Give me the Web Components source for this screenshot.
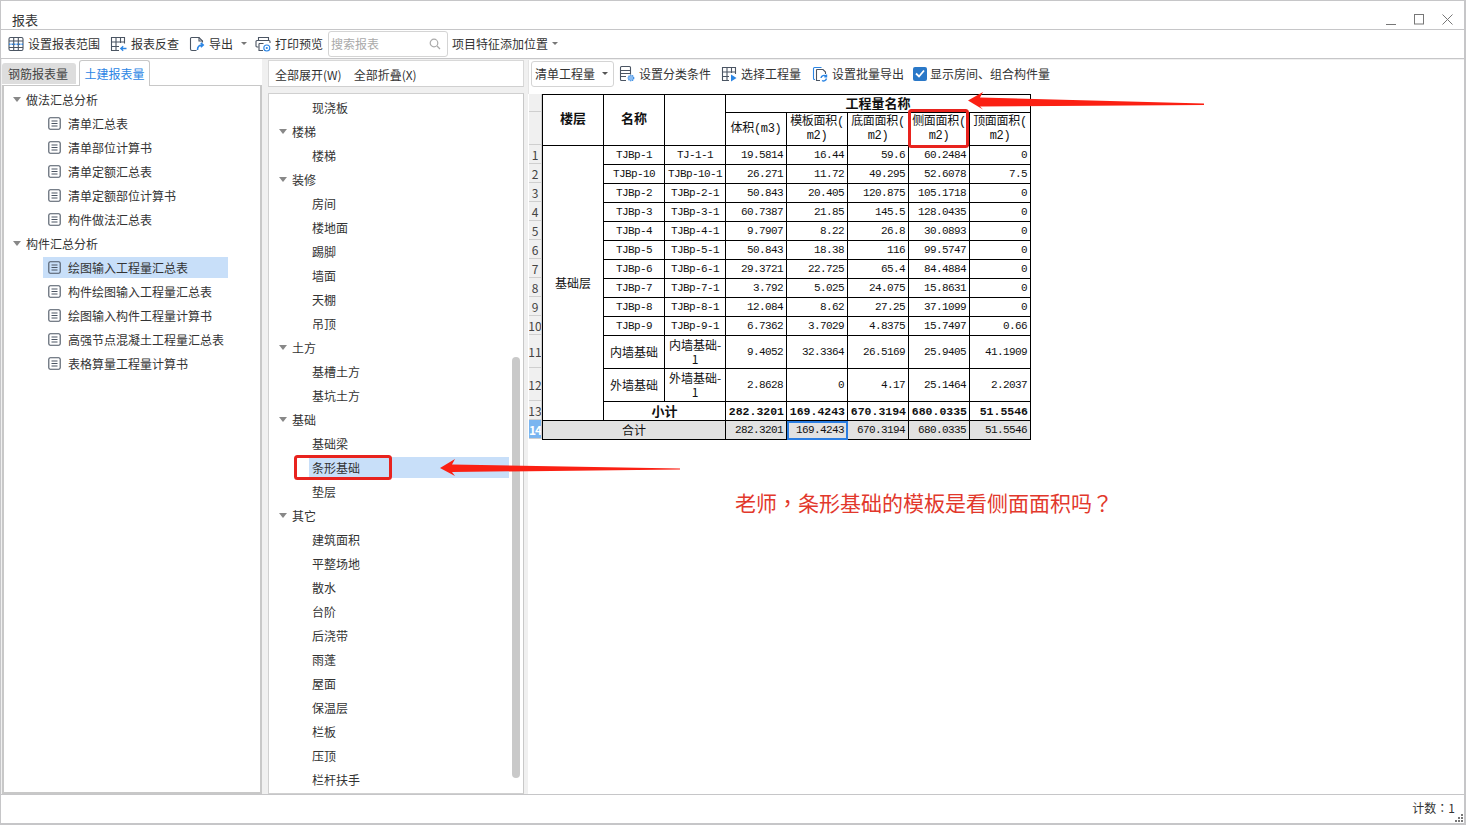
<!DOCTYPE html>
<html lang="zh">
<head>
<meta charset="utf-8">
<title>报表</title>
<style>
    html, body { margin: 0; height: 100%; overflow: hidden; }
    body { font: 12px "Noto Sans CJK SC", "Noto Sans", sans-serif; color: #333; }
</style>
</head>
<body>
<app-window>
    <win-titlebar slot="title" caption="报表"></win-titlebar>
    <main-toolbar slot="toolbar"></main-toolbar>
    <left-panel slot="left"></left-panel>
    <middle-panel slot="middle"></middle-panel>
    <right-panel slot="right"></right-panel>
    <status-bar slot="status" text="计数：1"></status-bar>
    <note-layer slot="notes"></note-layer>
</app-window>

<script>
const ICON = 'fill="none" stroke="#4b5563" stroke-width="1.1"';
const BLUE = '#2b85e4';
const icons = {
    range: `<svg width="16" height="16" viewBox="0 0 16 16" ${ICON}><rect x="1" y="1.5" width="14" height="13" rx="1.500"/><path d="M1 5h14M1 11.500h14M5.700 1.500v13M10.300 1.500v13"/><path d="M1 8.200h14" stroke="${BLUE}" stroke-width="1.500" stroke-dasharray="1.500 1"/></svg>`,
    lookup: `<svg width="17" height="16" viewBox="0 0 17 16" ${ICON}><path d="M9 14.500H1.500v-13h13V7.500M1.500 6h13M1.500 10.500H9M6 1.500v13M10.500 1.500V7"/><path d="M16.500 12.500H11M13.200 10.300l-2.400 2.200 2.400 2.200" stroke="${BLUE}" stroke-width="1.300"/></svg>`,
    exportDoc: `<svg width="16" height="16" viewBox="0 0 16 16" ${ICON}><path d="M7.500 14.500H3a1.500 1.500 0 0 1-1.500-1.500V2.500A1 1 0 0 1 2.500 1.500H10l3.500 3.500v1.500"/><path d="M10 1.500V5h3.500"/><path d="M8.500 14c0-3 2-5 5-5M11.800 6.800l2.400 2.200-2.400 2.200" stroke="${BLUE}" stroke-width="1.600"/></svg>`,
    print: `<svg width="16" height="16" viewBox="0 0 16 16" ${ICON}><path d="M3.500 4.500V1.500h10v3"/><path d="M3.500 11H2a1 1 0 0 1-1-1V5.500a1 1 0 0 1 1-1h12a1 1 0 0 1 1 1V7"/><path d="M4 7.500h4.500M4 7.500v7h4"/><circle cx="11.800" cy="12" r="3" stroke="${BLUE}"/><circle cx="11.800" cy="12" r="1.100" fill="${BLUE}" stroke="none"/></svg>`,
    classify: `<svg width="16" height="17" viewBox="0 0 16 17" ${ICON}><path d="M7 15.500H2.500a1 1 0 0 1-1-1v-12a1 1 0 0 1 1-1h8a1 1 0 0 1 1 1v7"/><path d="M1.500 5.500h10M1.500 8.500h10M1.500 11.500h5.500"/><circle cx="12" cy="13" r="2.800" fill="#8cbcf0" stroke="${BLUE}" stroke-dasharray="1.200 .8"/></svg>`,
    pick: `<svg width="16" height="16" viewBox="0 0 16 16" ${ICON}><path d="M8 14.500H1.500v-13h13V8M1.500 6h13M1.500 10.500H8M6 1.500v13M10.500 1.500V7"/><path d="M10 8.500l5.500 3.500-5.500 3.500z" fill="${BLUE}" stroke="none"/></svg>`,
    batch: `<svg width="16" height="16" viewBox="0 0 16 16" fill="none" stroke="${BLUE}" stroke-width="1.100"><path d="M3 13.500H2.500a1 1 0 0 1-1-1v-10a1 1 0 0 1 1-1h7"/><path d="M4.500 3.500h6.500l2.500 2.500v2M4.500 3.500v11h3.500" stroke="#4b5563"/><path d="M9 12a3 3 0 0 1 5-1.800M14.500 8.500v2.200h-2.200M14.500 12.500a3 3 0 0 1-4.500 2" stroke-width="1.400"/></svg>`,
    doc: `<svg width="13" height="13" viewBox="0 0 13 13" fill="none" stroke="#4b5563" stroke-width="1.100"><rect x=".8" y=".8" width="11.400" height="11.400" rx="1.500"/><path d="M3.500 4h6M3.500 6.500h6M3.500 9h6"/></svg>`,
};

class AppWindow extends HTMLElement {
    constructor() {
        super();
        this.attachShadow({ mode: 'open' });
        this.shadowRoot.innerHTML = `
            <style>
                :host {
                    display: flex;
                    flex-direction: column;
                    position: relative;
                    width: 1466px;
                    height: 825px;
                    box-sizing: border-box;
                    background: #f0f0f0;
                    border: solid #c6c6c8;
                    border-width: 1px 2px 2px 1px;
                    overflow: hidden;
                }
                .panes { flex: 1; display: flex; min-height: 0; padding-left: 1px; }
                .left { display: flex; width: 260px; }
                .middle { display: flex; width: 256px; margin-left: 6px; }
                .right { display: flex; flex: 1; margin-left: 4px; min-width: 0; }
                .panes ::slotted(*) { flex: 1; min-width: 0; }
            </style>
            <slot name="title"></slot>
            <slot name="toolbar"></slot>
            <div class="panes">
                <div class="left"><slot name="left"></slot></div>
                <div class="middle"><slot name="middle"></slot></div>
                <div class="right"><slot name="right"></slot></div>
            </div>
            <slot name="status"></slot>
            <slot name="notes"></slot>
        `;
    }
}

class WinTitlebar extends HTMLElement {
    constructor() {
        super();
        this.attachShadow({ mode: 'open' });
    }
    connectedCallback() {
        this.shadowRoot.innerHTML = `
            <style>
                :host {
                    display: flex;
                    align-items: center;
                    height: 28px;
                    flex: none;
                    background: #fff;
                    border-bottom: 1px solid #c6c6c8;
                    font-size: 13px;
                    padding: 0 11px 0 11px;
                }
                .cap { flex: 1; padding-top: 9px; }
                .ctl { display: flex; gap: 18px; padding-top: 8px; }
                svg { display: block; }
            </style>
            <div class="cap">${this.getAttribute('caption')}</div>
            <div class="ctl">
                <svg width="10" height="11" viewBox="0 0 10 11" stroke="#777" fill="none"><path d="M0 10.500h10"/></svg>
                <svg width="10" height="11" viewBox="0 0 10 11" stroke="#777" fill="none"><rect x=".5" y=".5" width="9" height="9.500"/></svg>
                <svg width="11" height="11" viewBox="0 0 11 11" stroke="#777" fill="none"><path d="M.5.500l10 10M10.500.500l-10 10"/></svg>
            </div>
        `;
    }
}

class ToolBtn extends HTMLElement {
    constructor() {
        super();
        this.attachShadow({ mode: 'open' });
    }
    connectedCallback() {
        const caret = this.hasAttribute('caret') ? '<span class="caret"></span>' : '';
        this.shadowRoot.innerHTML = `
            <style>
                :host { display: inline-flex; align-items: center; gap: 4px; white-space: nowrap; }
                svg { display: block; }
                .caret {
                    border: 3px solid transparent;
                    border-top: 3px solid #777;
                    border-bottom: 0;
                    margin-left: 4px;
                }
            </style>
            ${icons[this.getAttribute('icon')] || ''}<slot></slot>${caret}
        `;
    }
}

class MainToolbar extends HTMLElement {
    constructor() {
        super();
        this.attachShadow({ mode: 'open' });
        this.shadowRoot.innerHTML = `
            <style>
                :host {
                    display: flex;
                    align-items: center;
                    height: 29px;
                    box-sizing: border-box;
                    flex: none;
                    background: #fff;
                    border-bottom: 1px solid #c6c6c8;
                    padding: 0 0 1px 7px;
                }
                .search {
                    display: flex;
                    align-items: center;
                    justify-content: space-between;
                    box-sizing: border-box;
                    width: 120px;
                    height: 26px;
                    border: 1px solid #d4d4d4;
                    border-radius: 3px;
                    padding: 0 6px 0 2px;
                    margin-left: 5px;
                    color: #aaa;
                }
                .pos { display: inline-flex; align-items: center; margin-left: 4px; }
                .caret {
                    border: 3px solid transparent;
                    border-top: 3px solid #777;
                    border-bottom: 0;
                    margin-left: 4px;
                }
                tool-btn { margin-right: 10px; }
                tool-btn.tight { margin-right: 0; }
                tool-btn.export { margin-right: 8px; }
            </style>
            <tool-btn icon="range">设置报表范围</tool-btn>
            <tool-btn icon="lookup">报表反查</tool-btn>
            <tool-btn icon="exportDoc" class="export" caret>导出</tool-btn>
            <tool-btn icon="print" class="tight">打印预览</tool-btn>
            <div class="search">搜索报表
                <svg width="12" height="12" viewBox="0 0 12 12" fill="none" stroke="#aaa" stroke-width="1.200"><circle cx="5" cy="5" r="3.800"/><path d="M8 8l3 3"/></svg>
            </div>
            <span class="pos">项目特征添加位置<span class="caret"></span></span>
        `;
    }
}

class TreeRow extends HTMLElement {
    constructor() {
        super();
        this.attachShadow({ mode: 'open' });
    }
    connectedCallback() {
        const isGroup = this.hasAttribute('group');
        const hasIcon = this.hasAttribute('doc');
        const lead = isGroup
            ? '<span class="caret"></span>'
            : (hasIcon ? `<span class="ico">${icons.doc}</span>` : '');
        this.shadowRoot.innerHTML = `
            <style>
                :host { display: block; height: 24px; box-sizing: border-box; padding: 1.500px 0; }
                .row {
                    display: flex;
                    align-items: center;
                    height: 21px;
                    white-space: nowrap;
                    margin-left: var(--indent, 0);
                    width: var(--row-width, auto);
                    padding-left: var(--pad, 0);
                    box-sizing: border-box;
                }
                :host([selected]) .row { background: #c8dff9; }
                .caret {
                    border: 4px solid transparent;
                    border-top: 5px solid #888;
                    border-bottom: 0;
                    margin-right: 5px;
                }
                .ico { margin-right: 7px; display: block; height: 13px; }
                .ico svg { display: block; }
            </style>
            <div class="row">${lead}<slot></slot></div>
        `;
    }
}

class LeftPanel extends HTMLElement {
    constructor() {
        super();
        this.attachShadow({ mode: 'open' });
        const groups = [
            ['做法汇总分析', ['清单汇总表', '清单部位计算书', '清单定额汇总表', '清单定额部位计算书', '构件做法汇总表']],
            ['构件汇总分析', ['绘图输入工程量汇总表', '构件绘图输入工程量汇总表', '绘图输入构件工程量计算书', '高强节点混凝土工程量汇总表', '表格算量工程量计算书']],
        ];
        let rows = '';
        for (const [name, leaves] of groups) {
            rows += `<tree-row group class="g">${name}</tree-row>`;
            for (const leaf of leaves) {
                const sel = leaf === '绘图输入工程量汇总表' ? 'selected' : '';
                rows += `<tree-row doc class="l" ${sel}>${leaf}</tree-row>`;
            }
        }
        this.shadowRoot.innerHTML = `
            <style>
                :host { display: flex; flex-direction: column; background: #fff; }
                .tabs { display: flex; align-items: flex-end; height: 26px; flex: none; gap: 3px; }
                .tab { display: flex; align-items: center; justify-content: center; }
                .off {
                    width: 74px;
                    height: 21px;
                    box-sizing: border-box;
                    padding-right: 2px;
                    background: #ddd;
                    border-radius: 3px 3px 0 0;
                    color: #444;
                    margin-bottom: 1px;
                }
                .on {
                    width: 71px;
                    height: 26px;
                    box-sizing: border-box;
                    border: 1px solid #c8c8c8;
                    border-bottom: 0;
                    border-radius: 3px 3px 0 0;
                    color: ${BLUE};
                    position: relative;
                    top: 1px;
                    background: #fff;
                }
                .tree {
                    flex: 1;
                    border: 2px solid #c8c8c8;
                    border-width: 1px 2px 2px 2px;
                    padding-top: 1px;
                }
                .g { --pad: 9px; }
                .l { --indent: 39px; --row-width: 185px; --pad: 5px; }
            </style>
            <div class="tabs">
                <div class="tab off">钢筋报表量</div>
                <div class="tab on">土建报表量</div>
            </div>
            <div class="tree">${rows}</div>
        `;
    }
}

class MiddlePanel extends HTMLElement {
    constructor() {
        super();
        this.attachShadow({ mode: 'open' });
        const groups = [
            [null, ['现浇板']],
            ['楼梯', ['楼梯']],
            ['装修', ['房间', '楼地面', '踢脚', '墙面', '天棚', '吊顶']],
            ['土方', ['基槽土方', '基坑土方']],
            ['基础', ['基础梁', '条形基础', '垫层']],
            ['其它', ['建筑面积', '平整场地', '散水', '台阶', '后浇带', '雨蓬', '屋面', '保温层', '栏板', '压顶', '栏杆扶手']],
        ];
        let rows = '';
        for (const [name, leaves] of groups) {
            if (name) rows += `<tree-row group class="g">${name}</tree-row>`;
            for (const leaf of leaves) {
                const sel = leaf === '条形基础' ? 'selected' : '';
                rows += `<tree-row class="l" ${sel}>${leaf}</tree-row>`;
            }
        }
        this.shadowRoot.innerHTML = `
            <style>
                :host { display: flex; flex-direction: column; position: relative; }
                .head {
                    display: flex;
                    align-items: center;
                    gap: 12px;
                    height: 27px;
                    flex: none;
                    background: #fff;
                    border: 1px solid #d8d8d8;
                    border-bottom-color: #d0d0d0;
                    padding: 1px 0 0 6px;
                    box-sizing: border-box;
                    margin-top: 1px;
                }
                .tree {
                    flex: 1;
                    margin-top: 6px;
                    padding-top: 1px;
                    background: #fff;
                    border: 1px solid #d0d0d0;
                    border-right: 1px solid #c8c8c8;
                    overflow: hidden;
                    position: relative;
                }
                .g { --pad: 10px; }
                .l { --indent: 40px; --row-width: 200px; --pad: 3px; }
                .bar {
                    position: absolute;
                    left: 243px;
                    top: 263px;
                    width: 8px;
                    height: 421px;
                    border-radius: 4px;
                    background: #c9c9c9;
                }
            </style>
            <div class="head"><span>全部展开(W)</span><span>全部折叠(X)</span></div>
            <div class="tree">${rows}<div class="bar"></div></div>
        `;
    }
}

class RightPanel extends HTMLElement {
    constructor() {
        super();
        this.attachShadow({ mode: 'open' });
        this.shadowRoot.innerHTML = `
            <style>
                :host { display: flex; flex-direction: column; }
                .bar {
                    display: flex;
                    align-items: center;
                    height: 34px;
                    flex: none;
                    box-sizing: border-box;
                    background: #fff;
                    padding: 0 0 7px 2px;
                    margin-top: 1px;
                    border-left: 1px solid #e4e4e4;
                }
                .combo {
                    display: flex;
                    align-items: center;
                    justify-content: space-between;
                    box-sizing: border-box;
                    width: 83px;
                    height: 26px;
                    border: 1px solid #d4d4d4;
                    border-radius: 3px;
                    padding: 0 5px 0 3px;
                    margin-right: 5px;
                }
                .caret { border: 3px solid transparent; border-top: 3px solid #555; border-bottom: 0; }
                tool-btn { margin-right: 10px; }
                .check { display: inline-flex; align-items: center; gap: 3px; margin-left: -1px; }
                .box {
                    display: flex;
                    align-items: center;
                    justify-content: center;
                    width: 14px;
                    height: 14px;
                    border-radius: 2px;
                    background: #2a78c8;
                }
                .sheet { flex: 1; background: #fff; padding-left: 1px; min-height: 0; }
            </style>
            <div class="bar">
                <div class="combo">清单工程量<span class="caret"></span></div>
                <tool-btn icon="classify">设置分类条件</tool-btn>
                <tool-btn icon="pick">选择工程量</tool-btn>
                <tool-btn icon="batch" style="margin-left:1px">设置批量导出</tool-btn>
                <span class="check"><span class="box"><svg width="10" height="9" viewBox="0 0 10 9" fill="none" stroke="#fff" stroke-width="1.800"><path d="M1 4.500l3 3 5-6"/></svg></span>显示房间、组合构件量</span>
            </div>
            <div class="sheet"><report-sheet></report-sheet></div>
        `;
    }
}

const sheetRows = [
    ['TJBp-1', 'TJ-1-1', '19.5814', '16.44', '59.6', '60.2484', '0'],
    ['TJBp-10', 'TJBp-10-1', '26.271', '11.72', '49.295', '52.6078', '7.5'],
    ['TJBp-2', 'TJBp-2-1', '50.843', '20.405', '120.875', '105.1718', '0'],
    ['TJBp-3', 'TJBp-3-1', '60.7387', '21.85', '145.5', '128.0435', '0'],
    ['TJBp-4', 'TJBp-4-1', '9.7907', '8.22', '26.8', '30.0893', '0'],
    ['TJBp-5', 'TJBp-5-1', '50.843', '18.38', '116', '99.5747', '0'],
    ['TJBp-6', 'TJBp-6-1', '29.3721', '22.725', '65.4', '84.4884', '0'],
    ['TJBp-7', 'TJBp-7-1', '3.792', '5.025', '24.075', '15.8631', '0'],
    ['TJBp-8', 'TJBp-8-1', '12.084', '8.62', '27.25', '37.1099', '0'],
    ['TJBp-9', 'TJBp-9-1', '6.7362', '3.7029', '4.8375', '15.7497', '0.66'],
    ['内墙基础', '内墙基础-\n1', '9.4052', '32.3364', '26.5169', '25.9405', '41.1909'],
    ['外墙基础', '外墙基础-\n1', '2.8628', '0', '4.17', '25.1464', '2.2037'],
];
const subtotal = ['282.3201', '169.4243', '670.3194', '680.0335', '51.5546'];

class ReportSheet extends HTMLElement {
    constructor() {
        super();
        this.attachShadow({ mode: 'open' });
    }
    connectedCallback() {
        this.render();
    }
    render() {
        const heights = [19, 19, 19, 19, 19, 19, 19, 19, 19, 19, 33, 33, 19, 19];
        const nums = heights.map((h, i) =>
            `<div class="n ${i === 13 ? 'cur' : ''}" style="height:${h}px">${i + 1}</div>`).join('');

        let body = '';
        sheetRows.forEach((row, i) => {
            const h = heights[i];
            const floor = i === 0 ? `<td rowspan="13" class="cjk c">基础层</td>` : '';
            const values = row.slice(2).map(v => `<td class="r">${v}</td>`).join('');
            const nameCls = i > 9 ? 'cjk' : '';
            body += `<tr style="height:${h}px">${floor}
                <td class="c ${nameCls}">${row[0]}</td><td class="c pre ${nameCls}">${row[1]}</td>${values}</tr>`;
        });
        body += `<tr class="sub" style="height:19px"><td colspan="2" class="c cjkb">小计</td>
            ${subtotal.map(v => `<td class="r">${v}</td>`).join('')}</tr>`;
        body += `<tr class="total" style="height:19px"><td colspan="3" class="c cjk">合计</td>
            ${subtotal.map((v, i) => `<td class="r ${i === 1 ? 'cell-on' : ''}">${v}</td>`).join('')}</tr>`;

        this.shadowRoot.innerHTML = `
            <style>
                :host { display: flex; align-items: flex-start; }
                .nums { width: 13px; flex: none; background: #f0f0f0; }
                .n {
                    box-sizing: border-box;
                    display: flex;
                    align-items: center;
                    justify-content: center;
                    border-bottom: 1px solid #cfcfcf;
                    border-right: 1px solid #cfcfcf;
                    font-size: 12px;
                    overflow: hidden;
                    color: #444;
                }
                .cur { background: #7ab5f0; color: #fff; font-weight: bold; letter-spacing: -1px; }
                .hd { border-bottom: 1px solid #cfcfcf; border-right: 1px solid #cfcfcf; box-sizing: border-box; }
                table {
                    border-collapse: collapse;
                    table-layout: fixed;
                    width: 488px;
                    font: 11px "Liberation Mono", "Noto Sans CJK SC", monospace;
                    letter-spacing: -.6px;
                    color: #111;
                }
                td, th { border: 1px solid #000; padding: 0; overflow: hidden; line-height: 13px; box-sizing: border-box; }
                .c { text-align: center; }
                .r { text-align: right; padding-right: 3px; }
                .pre { white-space: pre-line; }
                th { font: bold 13px/14px "Noto Sans CJK SC", sans-serif; letter-spacing: 0; padding-bottom: 2px; overflow: visible; }
                th.side { padding-bottom: 4px; }
                th.unit {
                    font: 12px/14px "Liberation Mono", "Noto Sans CJK SC", monospace;
                    letter-spacing: -.3px;
                    white-space: pre-line;
                    padding-bottom: 0;
                    overflow: hidden;
                }
                .cjk { font: 12px/14px "Noto Sans CJK SC", sans-serif; letter-spacing: 0; }
                .cjkb { font: bold 13px/14px "Noto Sans CJK SC", sans-serif; letter-spacing: 0; }
                .sub td.r { font: bold 11.500px "Liberation Mono", monospace; letter-spacing: 0; padding-right: 2px; }
                .total td { background: #e2e2e2; }
                .cell-on { outline: 2px solid #2a7de1; outline-offset: -2px; }
            </style>
            <div class="nums">
                <div class="hd" style="height:18px"></div>
                <div class="hd" style="height:33px"></div>
                ${nums}
            </div>
            <table>
                <colgroup>
                    <col span="8" style="width:61px">
                </colgroup>
                <tr style="height:18px">
                    <th rowspan="2" class="side">楼层</th><th rowspan="2" class="side">名称</th><th rowspan="2"></th>
                    <th colspan="5">工程量名称</th>
                </tr>
                <tr style="height:33px">
                    <th class="unit">体积(m3)</th>
                    <th class="unit">模板面积(\nm2)</th>
                    <th class="unit">底面面积(\nm2)</th>
                    <th class="unit">侧面面积(\nm2)</th>
                    <th class="unit">顶面面积(\nm2)</th>
                </tr>
                ${body}
            </table>
        `;
    }
}

class StatusBar extends HTMLElement {
    constructor() {
        super();
        this.attachShadow({ mode: 'open' });
    }
    connectedCallback() {
        this.shadowRoot.innerHTML = `
            <style>
                :host {
                    display: flex;
                    align-items: center;
                    justify-content: flex-end;
                    position: relative;
                    height: 29px;
                    box-sizing: border-box;
                    flex: none;
                    background: #fff;
                    border-top: 1px solid #c6c6c8;
                    padding: 0 9px 4px 0;
                    font: 12px "Noto Sans CJK TC", sans-serif;
                }
                svg { position: absolute; right: 0; bottom: 0; }
                span { display: block; }
            </style>
            <span lang="zh-Hant">${this.getAttribute('text')}</span>
            <svg width="9" height="9" viewBox="0 0 9 9" fill="#777"><rect x="6" y="0" width="2" height="2"/><rect x="3" y="3" width="2" height="2"/><rect x="6" y="3" width="2" height="2"/><rect x="0" y="6" width="2" height="2"/><rect x="3" y="6" width="2" height="2"/><rect x="6" y="6" width="2" height="2"/></svg>
        `;
    }
}

// hand-drawn markup that was on top of the screenshot
class NoteLayer extends HTMLElement {
    constructor() {
        super();
        this.attachShadow({ mode: 'open' });
        this.shadowRoot.innerHTML = `
            <style>
                :host { position: absolute; left: -1px; top: -1px; width: 1466px; height: 825px; pointer-events: none; }
                svg { position: absolute; left: 0; top: 0; }
                .q {
                    position: absolute;
                    left: 735px;
                    top: 488px;
                    font: 21px/28px "Noto Sans CJK TC", sans-serif;
                    color: #e2382c;
                    white-space: nowrap;
                }
            </style>
            <svg width="1466" height="825" viewBox="0 0 1466 825" fill="#fb2013">
                <path d="M968 100.500L983 92l-3 5.500L1204 103.500v1.500L980 106.500l3 3z"/>
                <path d="M440 468L455 459l-3 5.500L680 468.500v1L452 472l3 4z"/>
                <g fill="none" stroke="#e8231e" stroke-width="3">
                    <rect x="909.500" y="110.500" width="58" height="36" rx="2"/>
                    <rect x="295.500" y="456.500" width="95" height="22" rx="2"/>
                </g>
            </svg>
            <div class="q" lang="zh-Hant">老师，条形基础的模板是看侧面面积吗？</div>
        `;
    }
}

customElements.define('app-window', AppWindow);
customElements.define('win-titlebar', WinTitlebar);
customElements.define('tool-btn', ToolBtn);
customElements.define('main-toolbar', MainToolbar);
customElements.define('tree-row', TreeRow);
customElements.define('left-panel', LeftPanel);
customElements.define('middle-panel', MiddlePanel);
customElements.define('right-panel', RightPanel);
customElements.define('report-sheet', ReportSheet);
customElements.define('status-bar', StatusBar);
customElements.define('note-layer', NoteLayer);
</script>
</body>
</html>
